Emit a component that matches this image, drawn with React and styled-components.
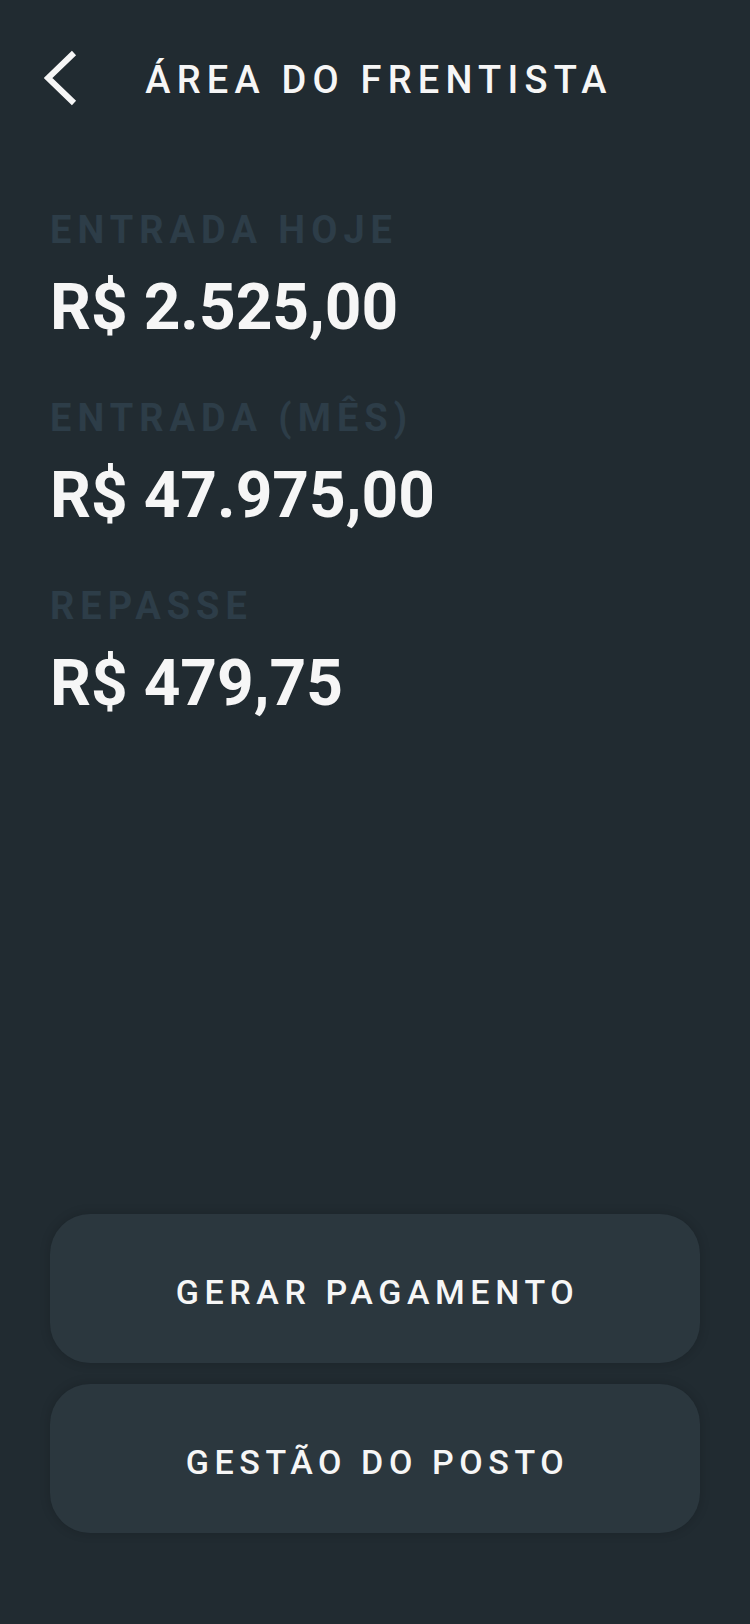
import React from "react";
import styled, { createGlobalStyle } from "styled-components";

const GlobalStyle = createGlobalStyle`
  body {
    margin: 0;
    background: #212b31;
    font-family: Roboto, "Noto Sans", "Liberation Sans", sans-serif;
  }
`;

const Page = styled.div`
  min-height: 100vh;
  box-sizing: border-box;
  display: flex;
  flex-direction: column;
  background: #212b31;
  padding-bottom: 91px;
`;

const Header = styled.header`
  display: grid;
  grid-template-columns: 1fr auto 1fr;
  align-items: center;
  height: 70px;
  margin-top: 40px;
  padding: 0 44px;
`;

const BackButton = styled.button`
  justify-self: start;
  display: flex;
  background: none;
  border: 0;
  padding: 0;
  cursor: pointer;
`;

const Title = styled.h1`
  margin: 0;
  padding: 5px 0 0 8px;
  font-size: 38px;
  line-height: 70px;
  font-weight: 500;
  letter-spacing: 6.2px;
  color: #f6f6f6;
  white-space: nowrap;
`;

const Stats = styled.section`
  display: flex;
  flex-direction: column;
  gap: 50px;
  margin-top: 98px;
  padding: 0 50px;
`;

const Stat = styled.div`
  display: flex;
  flex-direction: column;
  gap: 18px;
`;

const Label = styled.span`
  font-size: 38px;
  line-height: 44px;
  font-weight: 700;
  letter-spacing: 6px;
  color: #2d3d48;
`;

const Value = styled.span`
  font-size: 64px;
  line-height: 76px;
  font-weight: 700;
  color: #f6f6f6;
`;

const Actions = styled.div`
  margin-top: auto;
  display: flex;
  flex-direction: column;
  gap: 21px;
  padding: 0 50px;
`;

const ActionButton = styled.button`
  height: 149px;
  border: 0;
  border-radius: 40px;
  background: #2b373e;
  box-shadow: 0 0 10px 2px rgba(0, 0, 0, 0.12);
  color: #f6f6f6;
  font-family: inherit;
  font-size: 34px;
  font-weight: 500;
  letter-spacing: 5.6px;
  padding: 6px 0 0 5px;
  cursor: pointer;
`;

const stats = [
  { label: "ENTRADA HOJE", value: "R$ 2.525,00" },
  { label: "ENTRADA (MÊS)", value: "R$ 47.975,00" },
  { label: "REPASSE", value: "R$ 479,75" },
];

const App = () => {
  return (
    <Page>
      <GlobalStyle />
      <Header>
        <BackButton aria-label="Voltar">
          <svg width="34" height="56" viewBox="0 0 34 56">
            <polyline
              points="30,3 4,28 30,53"
              fill="none"
              stroke="#f6f6f6"
              strokeWidth="6"
              strokeLinejoin="miter"
            />
          </svg>
        </BackButton>
        <Title>ÁREA DO FRENTISTA</Title>
        <div />
      </Header>

      <Stats>
        {stats.map((s) => (
          <Stat key={s.label}>
            <Label>{s.label}</Label>
            <Value>{s.value}</Value>
          </Stat>
        ))}
      </Stats>

      <Actions>
        <ActionButton>GERAR PAGAMENTO</ActionButton>
        <ActionButton>GESTÃO DO POSTO</ActionButton>
      </Actions>
    </Page>
  );
};

export default App;
